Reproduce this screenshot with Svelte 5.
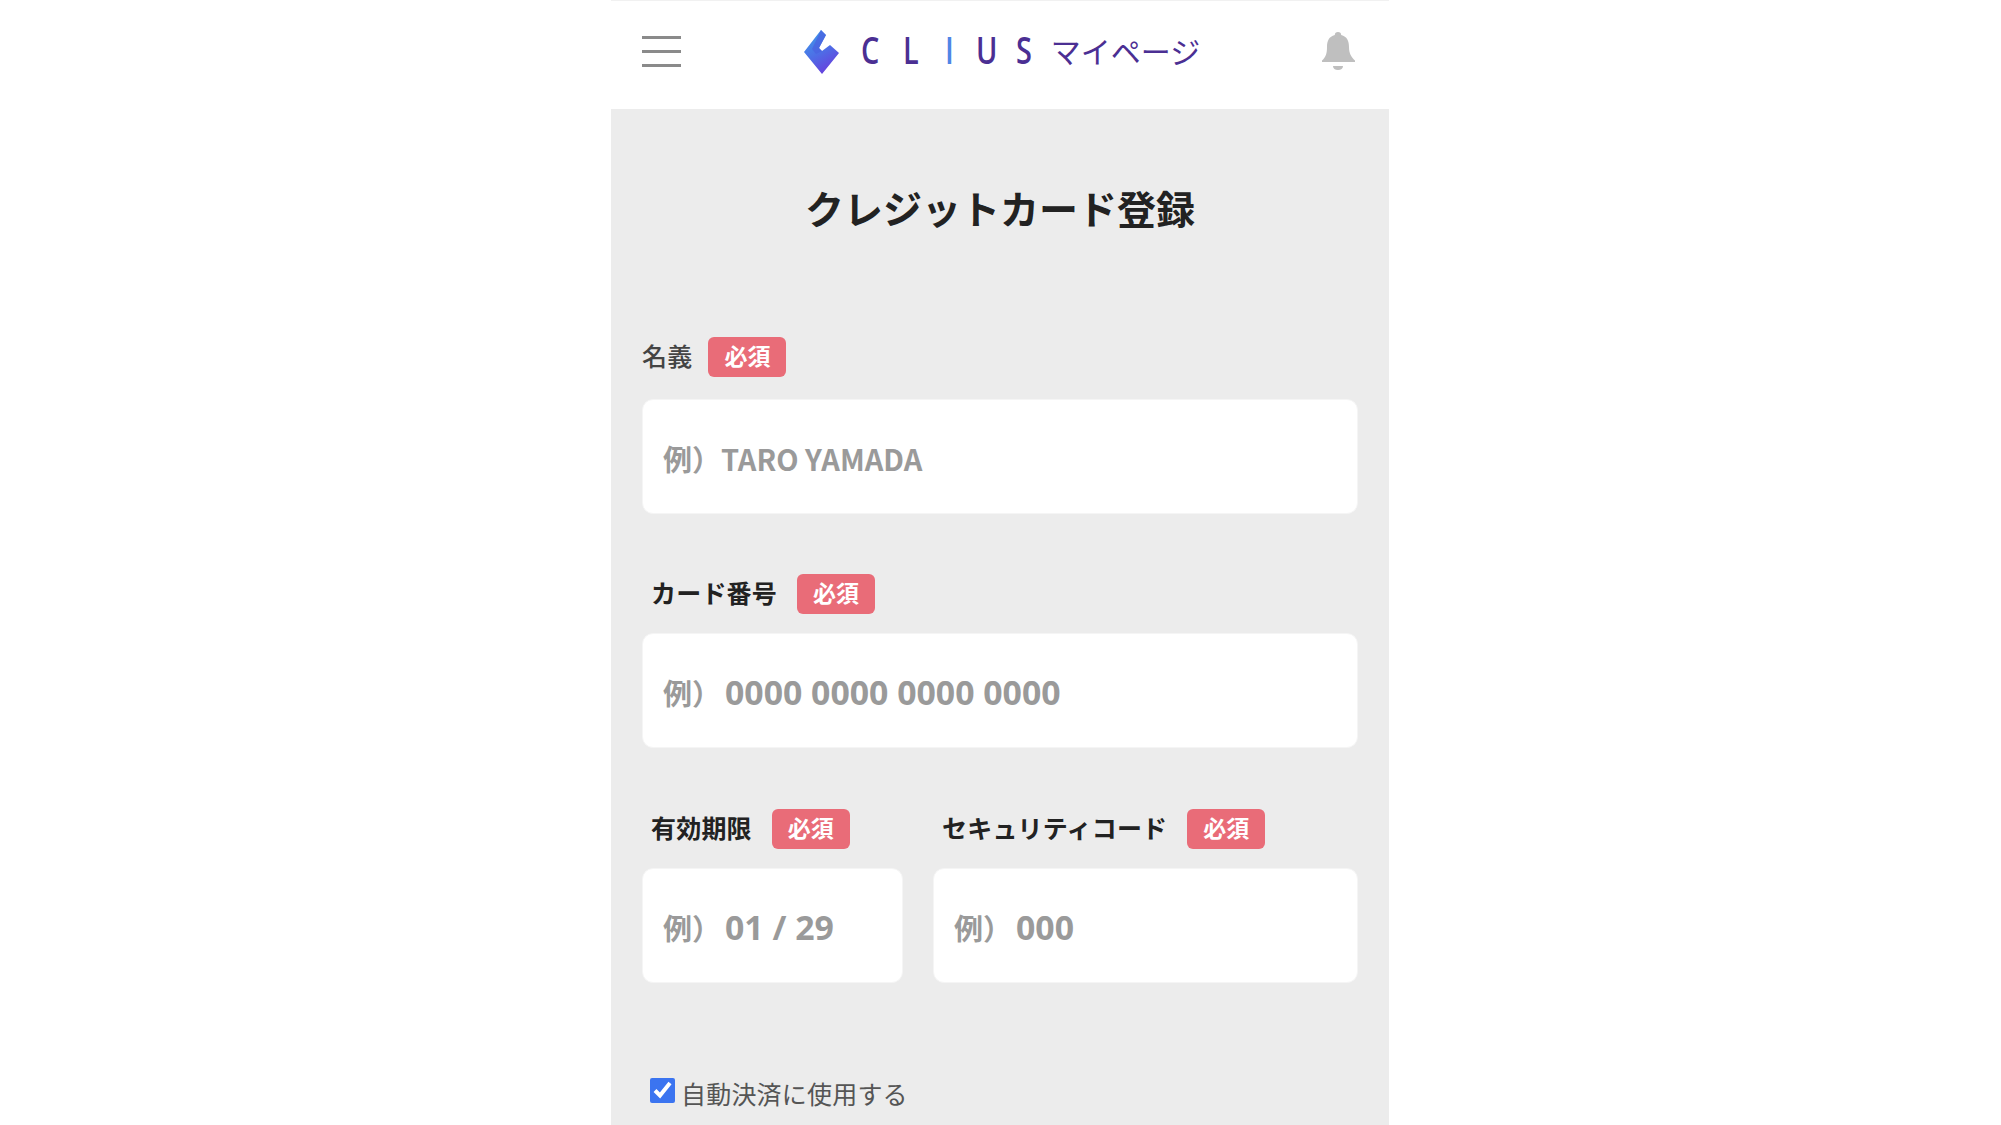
<script>
  const letters = ['C', 'L', 'I', 'U', 'S'];
</script>

<div class="page">
  <div class="panel">
    <header class="top">
      <button class="menu" type="button" aria-label="メニュー">
        <span></span><span></span><span></span>
      </button>
      <div class="logo">
        <svg class="mark" width="36" height="44" viewBox="0 0 36 44" aria-hidden="true">
          <defs>
            <linearGradient id="markFill" x1="0.2" y1="0" x2="0.7" y2="1">
              <stop offset="0" stop-color="#3f9bea" />
              <stop offset="0.5" stop-color="#4d6fe6" />
              <stop offset="1" stop-color="#6a3bdc" />
            </linearGradient>
          </defs>
          <path d="M17 0l5 5-7 13 3 3 8-6 9 8-17 21L0 22z" fill="url(#markFill)" />
          <path d="M17 0l5 5-7 13 3 3-6 3-4-5z" fill="#4a63e0" opacity="0.75" />
        </svg>
        <div class="brand">
          {#each letters as letter}
            <span>{letter}</span>
          {/each}
        </div>
        <span class="mypage">マイページ</span>
      </div>
      <svg class="bell" width="35" height="38" viewBox="0 0 35 38" aria-hidden="true">
        <path d="M17 0c-2 0-3.200 1.200-3.200 3C8 4.500 6 9 6 15c0 6-1 10-5 13.500V30h33v-1.500c-4-3.500-6-7.500-6-13.500 0-6-2-10.500-7.800-12C20.200 1.200 19 0 17 0z" fill="#bfbfbf" />
        <path d="M12 34h10c0 2.500-2 4-5 4s-5-1.500-5-4z" fill="#bfbfbf" />
      </svg>
    </header>

    <main class="content">
      <h1>クレジットカード登録</h1>

      <div class="field first">
        <div class="label plain"><span>名義</span><em>必須</em></div>
        <div class="input"><span>例）TARO YAMADA</span></div>
      </div>

      <div class="field second">
        <div class="label"><span>カード番号</span><em>必須</em></div>
        <div class="input"><span>例）</span><span class="num">0000 0000 0000 0000</span></div>
      </div>

      <div class="pair">
        <div class="field">
          <div class="label"><span>有効期限</span><em>必須</em></div>
          <div class="input"><span>例）</span><span class="num">01 / 29</span></div>
        </div>
        <div class="field">
          <div class="label"><span>セキュリティコード</span><em>必須</em></div>
          <div class="input"><span>例）</span><span class="num">000</span></div>
        </div>
      </div>

      <label class="auto">
        <input type="checkbox" checked />
        <span>自動決済に使用する</span>
      </label>
    </main>
  </div>
</div>

<style>
  :global(body) {
    background: #fff;
    font-family: "Noto Sans CJK JP", "Noto Sans", sans-serif;
    color: #222;
  }

  .page {
    display: flex;
    justify-content: center;
    height: 1125px;
    overflow: hidden;
  }

  .panel {
    width: 778px;
    margin-left: -1px;
    display: flex;
    flex-direction: column;
    background: #ececec;
  }

  .top {
    flex: none;
    display: flex;
    align-items: center;
    justify-content: space-between;
    box-sizing: border-box;
    height: 109px;
    padding: 0 33px 8px 31px;
    background: #fff;
    border-top: 1px solid #f1f1f1;
  }

  .menu {
    display: flex;
    flex-direction: column;
    gap: 11px;
    width: 39px;
    padding: 0;
    border: 0;
    background: none;
  }

  .menu span {
    height: 3px;
    background: #8a8a8a;
  }

  .logo {
    display: flex;
    align-items: center;
    margin-left: 2px;
    color: #4b2f93;
  }

  .mark {
    margin: 2px 21px 0 0;
  }

  .brand {
    display: flex;
    margin-bottom: 3px;
    font-family: "Open Sans", sans-serif;
    font-size: 37px;
    font-weight: 600;
    line-height: 1;
  }

  .brand span {
    display: block;
    width: 42px;
    transform: scaleX(0.78);
    transform-origin: left;
  }

  .brand span:nth-child(3) {
    width: 31px;
    color: #4f86e6;
  }

  .brand span:nth-child(4) {
    width: 40px;
  }

  .brand span:nth-child(5) {
    width: 35px;
  }

  .mypage {
    margin-bottom: 3px;
    font-size: 30px;
    font-weight: 400;
    line-height: 1;
  }

  .content {
    padding: 0 31px;
  }

  h1 {
    margin: 72px 0 0;
    font-size: 39px;
    line-height: 52px;
    font-weight: 700;
    text-align: center;
    color: #222;
  }

  .field {
    display: flex;
    flex-direction: column;
    min-width: 0;
  }

  .first {
    margin-top: 104px;
  }

  .second {
    margin-top: 60px;
  }

  .label {
    display: flex;
    align-items: center;
    height: 40px;
    margin-bottom: 19px;
    padding-left: 9px;
    font-size: 25px;
    font-weight: 700;
    letter-spacing: 0.2px;
    color: #222;
  }

  .label > span {
    padding-bottom: 5px;
  }

  .label.plain {
    padding-left: 0;
    margin-bottom: 22px;
    font-weight: 500;
    color: #444;
  }

  .label em {
    box-sizing: border-box;
    margin-left: 20px;
    width: 78px;
    height: 40px;
    padding-bottom: 4px;
    display: flex;
    align-items: center;
    justify-content: center;
    border-radius: 6px;
    background: #e96c78;
    color: #fff;
    font-style: normal;
    font-size: 23px;
    font-weight: 700;
    letter-spacing: 0;
  }

  .label.plain em {
    margin-left: 16px;
  }

  .input {
    box-sizing: border-box;
    height: 115px;
    display: flex;
    align-items: baseline;
    padding: 37px 20px 0;
    border: 1px solid #f5f5f5;
    border-radius: 11px;
    background: #fff;
    font-size: 29px;
    line-height: 42px;
    font-weight: 700;
    color: #9a9a9a;
    white-space: nowrap;
  }

  .num {
    margin-left: 4px;
    font-family: "Open Sans", sans-serif;
    font-size: 33.8px;
    font-weight: 700;
    white-space: pre;
  }

  .pair {
    display: grid;
    grid-template-columns: 261px 1fr;
    gap: 30px;
    margin-top: 61px;
  }

  .auto {
    display: flex;
    align-items: flex-start;
    gap: 6px;
    margin-top: 92px;
    padding-left: 8px;
    font-size: 25px;
    line-height: 36px;
    letter-spacing: 0.2px;
    color: #555;
  }

  .auto input {
    width: 25px;
    height: 25px;
    margin: 3px 0 0;
    accent-color: #3b74f0;
  }
</style>
